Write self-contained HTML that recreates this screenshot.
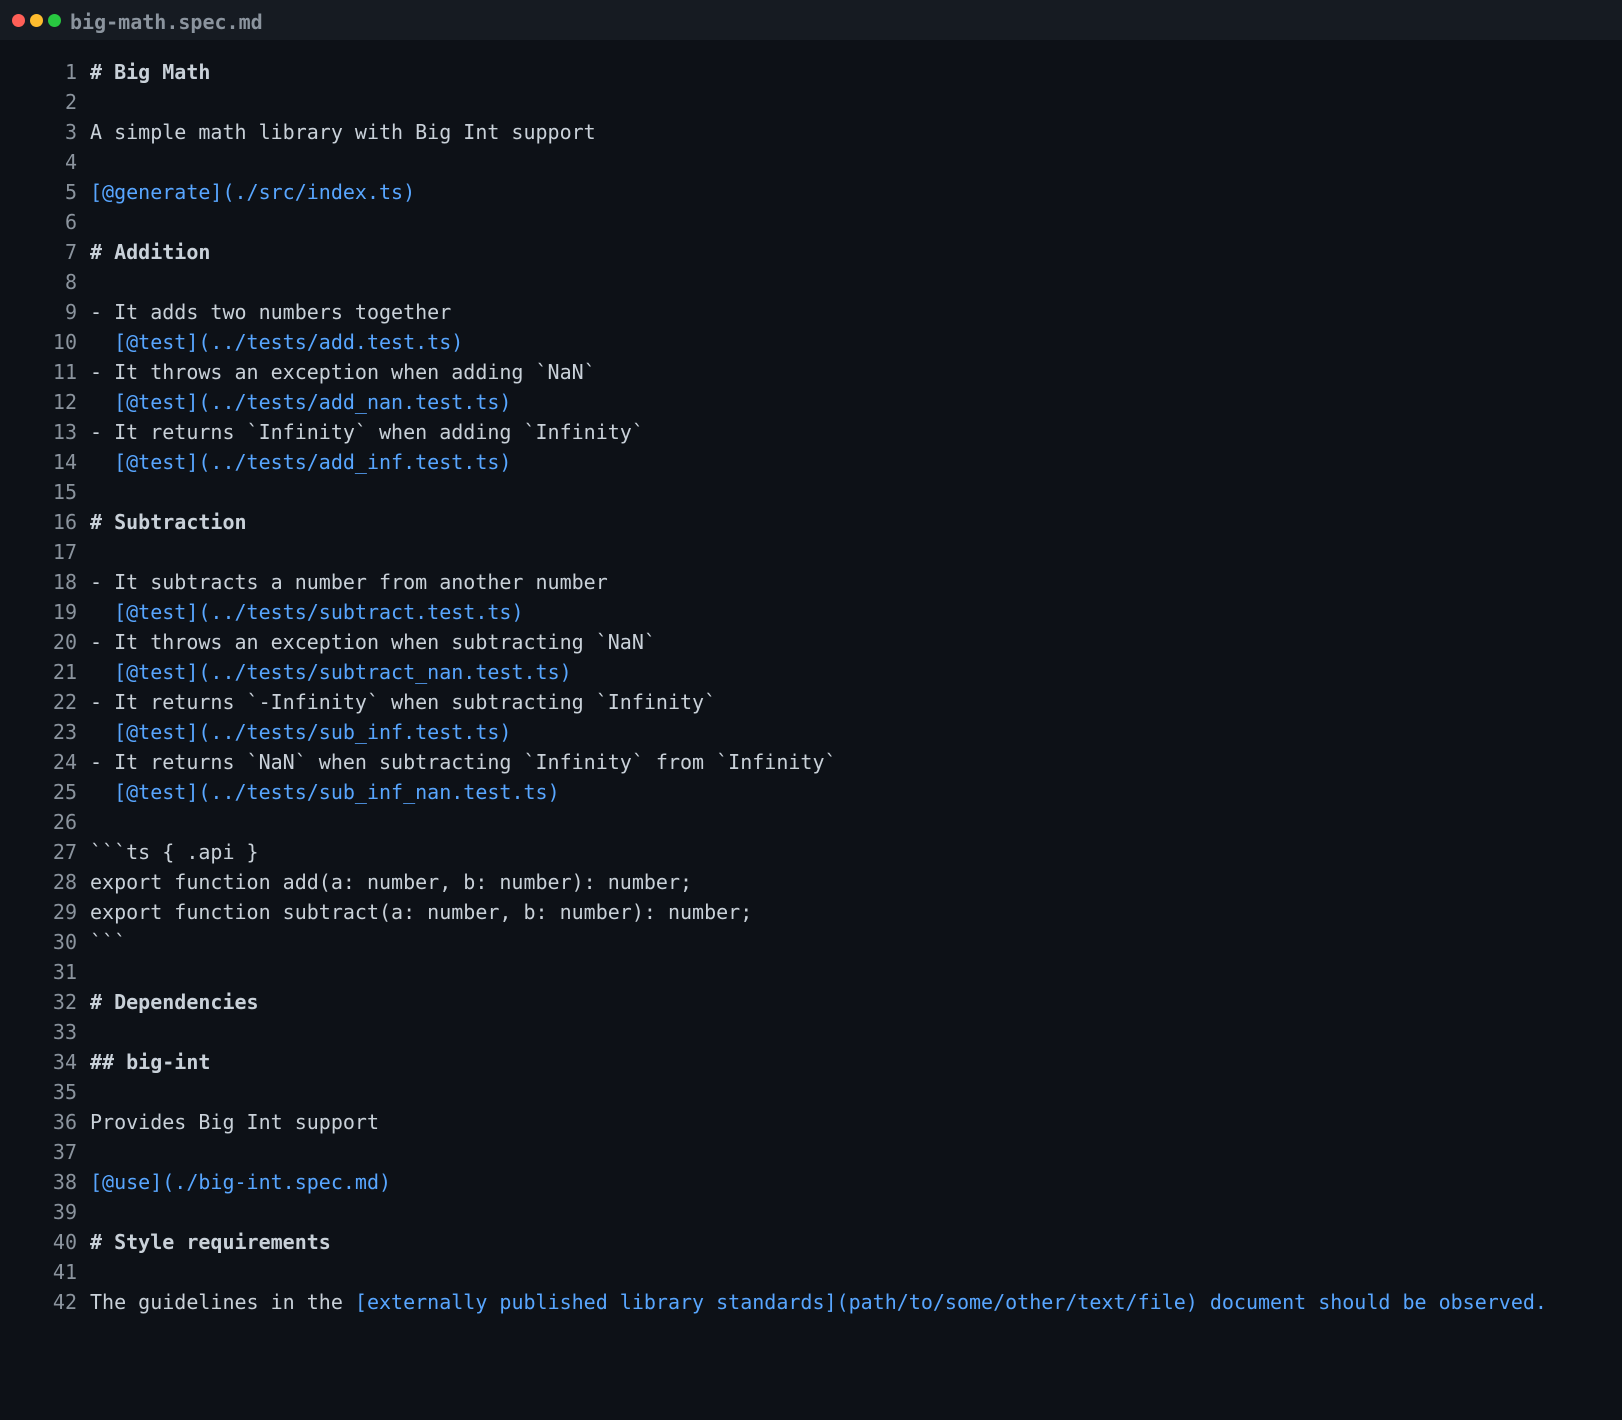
<!DOCTYPE html>
<html><head><meta charset="utf-8"><style>
html,body{margin:0;padding:0;background:#0d1117;width:1622px;height:1420px;overflow:hidden}
.bar{height:40px;background:#161b22;position:relative}
.dot{position:absolute;top:14px;width:13px;height:13px;border-radius:50%}
.title{position:absolute;left:70px;top:10px;height:40px;line-height:40px;font:bold 20px "DejaVu Sans Mono","Liberation Mono",monospace;color:#8b949e}
.code{padding-top:17px;font:20px "DejaVu Sans Mono","Liberation Mono",monospace;color:#c9d1d9}
.l{height:30px;line-height:30px;white-space:pre;position:relative}
.n{position:absolute;left:0;width:77px;text-align:right;color:#8b949e}
.t{position:absolute;left:90px}
.b{font-weight:bold}
.a{color:#58a6ff}
</style></head><body>
<div class="bar">
<div class="dot" style="left:12px;background:#ff5f57"></div>
<div class="dot" style="left:30px;background:#febc2e"></div>
<div class="dot" style="left:48px;background:#28c840"></div>
<div class="title">big-math.spec.md</div>
</div>
<div class="code">
<div class="l"><span class="n">1</span><span class="t b"># Big Math</span></div>
<div class="l"><span class="n">2</span></div>
<div class="l"><span class="n">3</span><span class="t">A simple math library with Big Int support</span></div>
<div class="l"><span class="n">4</span></div>
<div class="l"><span class="n">5</span><span class="t a">[@generate](./src/index.ts)</span></div>
<div class="l"><span class="n">6</span></div>
<div class="l"><span class="n">7</span><span class="t b"># Addition</span></div>
<div class="l"><span class="n">8</span></div>
<div class="l"><span class="n">9</span><span class="t">- It adds two numbers together</span></div>
<div class="l"><span class="n">10</span><span class="t">  <span class="a">[@test](../tests/add.test.ts)</span></span></div>
<div class="l"><span class="n">11</span><span class="t">- It throws an exception when adding &#96;NaN&#96;</span></div>
<div class="l"><span class="n">12</span><span class="t">  <span class="a">[@test](../tests/add_nan.test.ts)</span></span></div>
<div class="l"><span class="n">13</span><span class="t">- It returns &#96;Infinity&#96; when adding &#96;Infinity&#96;</span></div>
<div class="l"><span class="n">14</span><span class="t">  <span class="a">[@test](../tests/add_inf.test.ts)</span></span></div>
<div class="l"><span class="n">15</span></div>
<div class="l"><span class="n">16</span><span class="t b"># Subtraction</span></div>
<div class="l"><span class="n">17</span></div>
<div class="l"><span class="n">18</span><span class="t">- It subtracts a number from another number</span></div>
<div class="l"><span class="n">19</span><span class="t">  <span class="a">[@test](../tests/subtract.test.ts)</span></span></div>
<div class="l"><span class="n">20</span><span class="t">- It throws an exception when subtracting &#96;NaN&#96;</span></div>
<div class="l"><span class="n">21</span><span class="t">  <span class="a">[@test](../tests/subtract_nan.test.ts)</span></span></div>
<div class="l"><span class="n">22</span><span class="t">- It returns &#96;-Infinity&#96; when subtracting &#96;Infinity&#96;</span></div>
<div class="l"><span class="n">23</span><span class="t">  <span class="a">[@test](../tests/sub_inf.test.ts)</span></span></div>
<div class="l"><span class="n">24</span><span class="t">- It returns &#96;NaN&#96; when subtracting &#96;Infinity&#96; from &#96;Infinity&#96;</span></div>
<div class="l"><span class="n">25</span><span class="t">  <span class="a">[@test](../tests/sub_inf_nan.test.ts)</span></span></div>
<div class="l"><span class="n">26</span></div>
<div class="l"><span class="n">27</span><span class="t">&#96;&#96;&#96;ts { .api }</span></div>
<div class="l"><span class="n">28</span><span class="t">export function add(a: number, b: number): number;</span></div>
<div class="l"><span class="n">29</span><span class="t">export function subtract(a: number, b: number): number;</span></div>
<div class="l"><span class="n">30</span><span class="t">&#96;&#96;&#96;</span></div>
<div class="l"><span class="n">31</span></div>
<div class="l"><span class="n">32</span><span class="t b"># Dependencies</span></div>
<div class="l"><span class="n">33</span></div>
<div class="l"><span class="n">34</span><span class="t b">## big-int</span></div>
<div class="l"><span class="n">35</span></div>
<div class="l"><span class="n">36</span><span class="t">Provides Big Int support</span></div>
<div class="l"><span class="n">37</span></div>
<div class="l"><span class="n">38</span><span class="t a">[@use](./big-int.spec.md)</span></div>
<div class="l"><span class="n">39</span></div>
<div class="l"><span class="n">40</span><span class="t b"># Style requirements</span></div>
<div class="l"><span class="n">41</span></div>
<div class="l"><span class="n">42</span><span class="t">The guidelines in the <span class="a">[externally published library standards](path/to/some/other/text/file) document should be observed.</span></span></div>
</div>
</body></html>
